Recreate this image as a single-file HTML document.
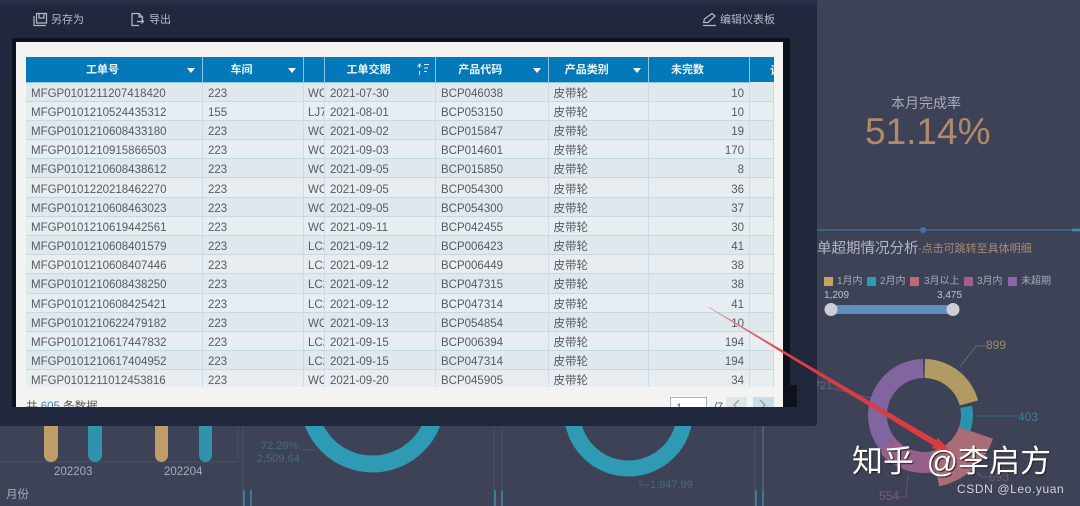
<!DOCTYPE html>
<html lang="zh"><head><meta charset="utf-8">
<style>
html,body{margin:0;padding:0;background:#3e4256}
body{position:relative;width:1080px;height:506px;overflow:hidden;font-family:"Liberation Sans","Noto Sans CJK SC",sans-serif}
.a{position:absolute;white-space:nowrap;line-height:1}
svg{position:absolute;left:0;top:0}
#dlg{position:absolute;left:0;top:0;width:817px;height:426px;background:#21273d;border-radius:0 0 3px 0}
#top{position:absolute;left:0;top:0;width:817px;height:8px;background:linear-gradient(#2b3149,#21273d)}
#frame{position:absolute;left:12px;top:38px;width:785px;height:369px;background:#0e121e}
#thumb{position:absolute;left:790px;top:38px;width:7px;height:347px;background:#23273a}
#panel{position:absolute;left:16px;top:42px;width:767px;height:365px;background:#f3f4f2;overflow:hidden}
#wrap{position:absolute;left:10px;top:15px;width:748px;height:330px;overflow:hidden}
table{border-collapse:collapse;table-layout:fixed;width:748px;font-size:11.5px;color:#555b60}
th{height:25px;padding:0 23px 0 0;background:#0379b9;color:#eef6fb;font-size:11px;font-weight:700;text-align:center;border-right:1px solid #8cc4e2;box-sizing:border-box;position:relative;border-bottom:1px solid #8cc4e2}
td{height:19.2px;padding:4px 0 0 5px;box-sizing:border-box;border-right:1px solid #ccdbe4;border-bottom:1px solid #c6d8e3;overflow:hidden;white-space:nowrap;line-height:14px}
tr:nth-child(odd) td{background:#dfe8ed}
tr:nth-child(even) td{background:#e7edf1}
td:nth-child(3){padding-left:4px}
td:nth-child(7){text-align:right;padding:4px 5px 0 0}
i.c{position:absolute;right:7px;top:11px;width:0;height:0;border-left:4px solid transparent;border-right:4px solid transparent;border-top:5px solid #fff}
.tb{color:#b6bac6;font-size:11px}
</style></head>
<body>
<svg width="1080" height="506" viewBox="0 0 1080 506" fill="none">
  <path d="M817 230H1080" stroke="#3f6b8f" stroke-width="1.5"/>
  <path d="M1072 230H1080" stroke="#3a93ad" stroke-width="2.5"/>
  <circle cx="923" cy="230" r="3" fill="#3f74b4"/>
  <path d="M0 462H238V426" stroke="#4a4e63"/>
  <path d="M243 426V506M494 426V506M502 426V506M755 426V506" stroke="#4a5166"/>
  <path d="M763 426V506" stroke="#4f7ba0"/>
  <path d="M244 490V506M251 490V506M495 490V506M502 490V506M756 490V506M763 490V506" stroke="#3a8da8" stroke-width="1.5"/>
  <path d="M44 426H58V455a7 7 0 0 1-14 0Z" fill="#c09c68"/>
  <path d="M88 426H102V455a7 7 0 0 1-14 0Z" fill="#3092ad"/>
  <path d="M155 426H168V455a6.500 7 0 0 1-13 0Z" fill="#c09c68"/>
  <path d="M199 426H212V455a6.500 7 0 0 1-13 0Z" fill="#3092ad"/>
  <circle cx="372.500" cy="400" r="64" stroke="#2f9ab4" stroke-width="17"/>
  <circle cx="628.500" cy="412" r="56.500" stroke="#2f9ab4" stroke-width="16"/>
  <path d="M303 450L313 450" stroke="#4a6272"/>
  <path d="M640 479V485H650" stroke="#4a6272"/>
  <path d="M925 359A56 56 0 0 1 978.100 400.500L959.700 405.400A37 37 0 0 0 924.600 378Z" fill="#b29a63"/>
  <path d="M972.100 405.600A49 49 0 0 1 970.300 431L959 427A37 37 0 0 0 960.300 407.900Z" fill="#2a93ae"/>
  <path d="M936 471.700A58 58 0 0 1 878.300 450.700L894.800 437.800A37 37 0 0 0 931.700 451.200Z" fill="#96608a"/>
  <path d="M879.900 449.500A56 56 0 0 1 923 359L923.400 378A37 37 0 0 0 894.800 437.800Z" fill="#80659f"/>
  <path d="M993 438.800A73 73 0 0 1 939.200 486.400L931.700 451.200A37 37 0 0 0 959 427Z" fill="#a96d78"/>
  <path d="M960 367L976 346H986" stroke="#6d6a63"/>
  <path d="M976 416H1018" stroke="#35687c"/>
  <path d="M908 475L906 497H898" stroke="#6a5470"/>
  <path d="M832 388L870 398" stroke="#5c5a7c"/>
  <path d="M977 472L982 477H989" stroke="#665a70"/>
  <rect x="824" y="277" width="9" height="9" fill="#c7a261"/>
  <rect x="867" y="277" width="9" height="9" fill="#2b9cb7"/>
  <rect x="910" y="277" width="9" height="9" fill="#bb6c72"/>
  <rect x="964" y="277" width="9" height="9" fill="#a0608c"/>
  <rect x="1008" y="277" width="9" height="9" fill="#8a66a8"/>
  <rect x="831" y="305" width="122" height="9" rx="2" fill="#5f8fbc"/>
  <circle cx="831" cy="309.500" r="6.500" fill="#cdced5"/>
  <circle cx="953" cy="309.500" r="6.500" fill="#cdced5"/>
</svg>

<div class="a" style="left:891px;top:96px;font-size:14px;color:#a9abb8">本月完成率</div>
<div class="a" style="left:865px;top:113px;font-size:37px;color:#b08b69">51.14%</div>
<div class="a" style="left:817px;top:242px;font-size:14.500px;color:#b2b4bf">单超期情况分析</div>
<div class="a" style="left:918px;top:244px;font-size:11px;color:#a58c7a">-点击可跳转至具体明细</div>
<div class="a" style="left:837px;top:277px;font-size:10px;color:#a9abb8">1月内</div>
<div class="a" style="left:880px;top:277px;font-size:10px;color:#a9abb8">2月内</div>
<div class="a" style="left:924px;top:277px;font-size:10px;color:#a9abb8">3月以上</div>
<div class="a" style="left:977px;top:277px;font-size:10px;color:#a9abb8">3月内</div>
<div class="a" style="left:1021px;top:277px;font-size:10px;color:#a9abb8">未超期</div>
<div class="a" style="left:824px;top:291px;font-size:10px;color:#c0c2cc">1,209</div>
<div class="a" style="left:937px;top:291px;font-size:10px;color:#c0c2cc">3,475</div>
<div class="a" style="left:986px;top:339px;font-size:12px;color:#9c8a68">899</div>
<div class="a" style="left:1018px;top:411px;font-size:12px;color:#3c8098">403</div>
<div class="a" style="left:989px;top:471px;font-size:12px;color:#6f5b72">693</div>
<div class="a" style="left:879px;top:490px;font-size:12px;color:#7a5d80">554</div>
<div class="a" style="left:814px;top:381px;font-size:11px;color:#666890">721</div>
<div class="a" style="left:261px;top:441px;font-size:11px;color:#3b6f86">72.29%</div>
<div class="a" style="left:257px;top:454px;font-size:11px;color:#3b6f86">2,509.64</div>
<div class="a" style="left:650px;top:480px;font-size:11px;color:#3b6f86">1,947.99</div>
<div class="a" style="left:54px;top:467px;font-size:11.500px;color:#a9abb8">202203</div>
<div class="a" style="left:164px;top:467px;font-size:11.500px;color:#a9abb8">202204</div>
<div class="a" style="left:6px;top:490px;font-size:11.500px;color:#a9abb8">月份</div>

<div id="dlg">
  <div id="top"></div>
  <div id="frame"></div>
  <div id="thumb"></div>
  <div id="panel">
    <div id="wrap">
    <table>
      <colgroup><col style="width:176.500px"><col style="width:101px"><col style="width:21px"><col style="width:111px"><col style="width:112.500px"><col style="width:100.500px"><col style="width:101px"><col></colgroup>
      <thead><tr>
        <th>工单号<i class="c"></i></th><th>车间<i class="c"></i></th><th style="padding:0"></th><th>工单交期</th><th>产品代码<i class="c"></i></th><th>产品类别<i class="c"></i></th><th>未完数</th><th style="padding:0 0 0 20px;text-align:left;border:0">计</th>
      </tr></thead>
      <tbody>
      <tr><td>MFGP0101211207418420</td><td>223</td><td>WC</td><td>2021-07-30</td><td>BCP046038</td><td>皮带轮</td><td>10</td><td></td></tr>
      <tr><td>MFGP0101210524435312</td><td>155</td><td>LJ7</td><td>2021-08-01</td><td>BCP053150</td><td>皮带轮</td><td>10</td><td></td></tr>
      <tr><td>MFGP0101210608433180</td><td>223</td><td>WC</td><td>2021-09-02</td><td>BCP015847</td><td>皮带轮</td><td>19</td><td></td></tr>
      <tr><td>MFGP0101210915866503</td><td>223</td><td>WC</td><td>2021-09-03</td><td>BCP014601</td><td>皮带轮</td><td>170</td><td></td></tr>
      <tr><td>MFGP0101210608438612</td><td>223</td><td>WC</td><td>2021-09-05</td><td>BCP015850</td><td>皮带轮</td><td>8</td><td></td></tr>
      <tr><td>MFGP0101220218462270</td><td>223</td><td>WC</td><td>2021-09-05</td><td>BCP054300</td><td>皮带轮</td><td>36</td><td></td></tr>
      <tr><td>MFGP0101210608463023</td><td>223</td><td>WC</td><td>2021-09-05</td><td>BCP054300</td><td>皮带轮</td><td>37</td><td></td></tr>
      <tr><td>MFGP0101210619442561</td><td>223</td><td>WC</td><td>2021-09-11</td><td>BCP042455</td><td>皮带轮</td><td>30</td><td></td></tr>
      <tr><td>MFGP0101210608401579</td><td>223</td><td>LC2</td><td>2021-09-12</td><td>BCP006423</td><td>皮带轮</td><td>41</td><td></td></tr>
      <tr><td>MFGP0101210608407446</td><td>223</td><td>LC2</td><td>2021-09-12</td><td>BCP006449</td><td>皮带轮</td><td>38</td><td></td></tr>
      <tr><td>MFGP0101210608438250</td><td>223</td><td>LC2</td><td>2021-09-12</td><td>BCP047315</td><td>皮带轮</td><td>38</td><td></td></tr>
      <tr><td>MFGP0101210608425421</td><td>223</td><td>LC2</td><td>2021-09-12</td><td>BCP047314</td><td>皮带轮</td><td>41</td><td></td></tr>
      <tr><td>MFGP0101210622479182</td><td>223</td><td>WC</td><td>2021-09-13</td><td>BCP054854</td><td>皮带轮</td><td>10</td><td></td></tr>
      <tr><td>MFGP0101210617447832</td><td>223</td><td>LC2</td><td>2021-09-15</td><td>BCP006394</td><td>皮带轮</td><td>194</td><td></td></tr>
      <tr><td>MFGP0101210617404952</td><td>223</td><td>LC2</td><td>2021-09-15</td><td>BCP047314</td><td>皮带轮</td><td>194</td><td></td></tr>
      <tr><td>MFGP0101211012453816</td><td>223</td><td>WC</td><td>2021-09-20</td><td>BCP045905</td><td>皮带轮</td><td>34</td><td></td></tr>
      </tbody>
    </table>
    </div>
    <div class="a" style="left:10px;top:360px;font-size:11.500px;color:#555">共 <span style="color:#4a7fc0">605</span> 条数据</div>
    <div style="position:absolute;left:654px;top:355px;width:35px;height:20px;border:1px solid #9db7cf;background:#fff"></div>
    <div class="a" style="left:660px;top:361px;font-size:11px;color:#555">1</div>
    <div class="a" style="left:698px;top:360px;font-size:11px;color:#555">/7</div>
    <div style="position:absolute;left:710px;top:355px;width:21px;height:20px;background:#dfe6ea"></div>
    <div style="position:absolute;left:737px;top:355px;width:21px;height:20px;background:#c9dde8"></div>
    <svg width="767" height="365" viewBox="0 0 767 365" fill="none" stroke="#8a9aa5" stroke-width="1.200">
      <path d="M723 358L718 363L723 368M744 358L749 363L744 368"/>
    </svg>
  </div>
  <svg width="817" height="38" viewBox="0 0 817 38" fill="none" stroke="#b6bac6" stroke-width="1.200">
    <path d="M34 16V25.500H46M36.500 13.500H46.500V23H36.500ZM39 13.500V18H44V13.500"/>
    <path d="M139 25.500H132V13.500H139L142.500 17V20M139 13.500V17H142.500M137 21.500H143.500M141.500 19.500L143.500 21.500L141.500 23.500"/>
    <path d="M703.500 22.500L704.500 19L712 13.500L715 16L708 22.500ZM703 25.500H716"/>
  </svg>
  <div class="a tb" style="left:51px;top:15px">另存为</div>
  <div class="a tb" style="left:149px;top:15px">导出</div>
  <div class="a tb" style="left:720px;top:15px">编辑仪表板</div>
</div>

<svg width="1080" height="506" viewBox="0 0 1080 506">
  <defs><linearGradient id="ar" gradientUnits="userSpaceOnUse" x1="709" y1="307" x2="800" y2="362"><stop offset="0" stop-color="#cf9a98"/><stop offset="1" stop-color="#dc3b43"/></linearGradient></defs>
  <path d="M709 307L936.500 440.400L938 438L953 454L932 448L933.500 445.600L708.500 307.500Z" fill="url(#ar)"/>
  <path d="M419.500 71V75M419.500 64V68M417.500 66.500L419.500 64L421.500 66.500M424 64.500H429M424 68H428M424 71.500H427" stroke="#dff0f8" fill="none"/>
</svg>

<div class="a" style="left:852px;top:446px;font-size:31px;color:#fff;text-shadow:1px 1px 1px #222;word-spacing:4px">知乎 @李启方</div>
<div class="a" style="left:957px;top:483px;font-size:12px;color:#d5d7dd;letter-spacing:.6px;text-shadow:0 0 1px #333">CSDN @Leo.yuan</div>
</body></html>
